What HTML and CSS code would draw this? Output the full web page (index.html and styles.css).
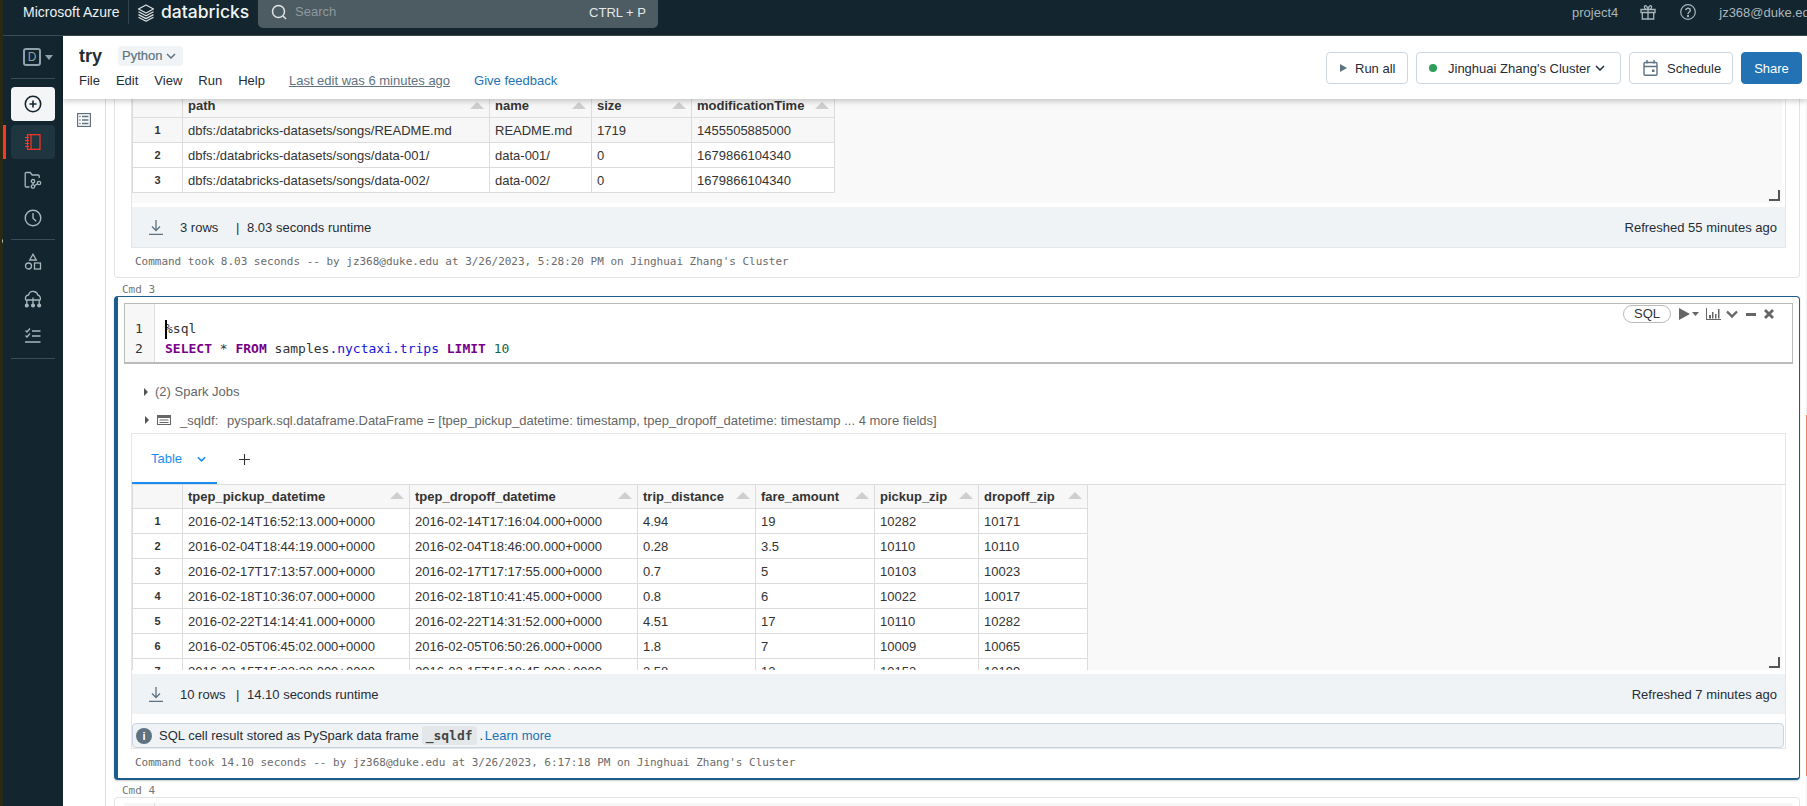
FILE: index.html
```html
<!DOCTYPE html>
<html lang="en">
<head>
<meta charset="utf-8">
<title>try - Databricks</title>
<link rel="stylesheet" href="styles.css">
</head>
<body>
<div class="edge-strip"><span class="edge-notch"></span></div>
<div class="app">
  <header class="topbar">
    <span class="brand-azure">Microsoft Azure</span>
    <span class="brand-sep"></span>
    <svg class="brand-logo" viewBox="0 0 18 18" fill="none" stroke="#dfe4e6" stroke-width="1.2" stroke-linejoin="round"><path d="M9 1 16.500 5 9 9 1.500 5Z"/><path d="M1.500 7.800 9 11.800 16.500 7.800"/><path d="M1.500 10.600 9 14.600 16.500 10.600"/><path d="M1.500 13.200 9 17.200 16.500 13.200"/></svg>
    <span class="brand-name">databricks</span>
    <div class="searchbox">
      <svg class="search-icon" viewBox="0 0 16 16" fill="none" stroke="#dfe4e6" stroke-width="1.500"><circle cx="7.500" cy="7.500" r="6"/><path d="M12 12l3 3"/></svg>
      <span class="search-text">Search</span>
      <span class="search-key">CTRL + P</span>
    </div>
    <div class="top-right">
      <span class="top-text">project4</span>
      <svg class="top-gift" viewBox="0 0 16 16" fill="none" stroke="#a9b6bc" stroke-width="1.300"><path d="M1 5.500h14v3H1zM2.300 8.500v6.500h11.400V8.500M8 5.500V15M8 5.500C6 5.500 4 4.500 4.500 2.500S7.500 2 8 5.500c.5-3.500 3-5 3.500-3S10 5.500 8 5.500Z"/></svg>
      <svg class="top-help" viewBox="0 0 16 16" fill="none" stroke="#a9b6bc" stroke-width="1.200"><circle cx="8" cy="8" r="7.300"/><path d="M5.800 6.200C6 3.600 10.300 3.600 10.300 6.200c0 1.800-2.300 1.700-2.300 3.700" stroke-width="1.400"/><circle cx="8" cy="12" r=".6" fill="#a9b6bc"/></svg>
      <span class="top-text top-user">jz368@duke.edu</span>
    </div>
  </header>
  <div class="shell">
    <nav class="sidebar">
      <div class="workspace-switch"><span class="workspace-d">D</span><span class="caret-down"></span></div>
      <div class="side-rule"></div>
      <div class="side-item side-new">
        <svg class="icon-18" viewBox="0 0 18 18" fill="none" stroke="#13252e" stroke-width="1.600"><circle cx="9" cy="9" r="7.700"/><path d="M9 5.500v7M5.500 9h7"/></svg>
      </div>
      <div class="side-item side-active">
        <svg class="icon-18" viewBox="0 0 18 18" fill="none" stroke="#ff3621" stroke-width="1.200"><rect x="3.500" y="1.700" width="12.500" height="14.600"/><path d="M7 1.700v14.600M1 4.500h4M1 7.500h4M1 10.500h4M1 13.500h4"/></svg>
      </div>
      <div class="side-item">
        <svg class="icon-18" viewBox="0 0 18 18" fill="none" stroke="#a9b6bc" stroke-width="1.300"><path d="M5.500 16H2.200a1 1 0 0 1-1-1V2.500a1 1 0 0 1 1-1h4l2 2.500h6a1 1 0 0 1 1 1V7"/><circle cx="9" cy="10.200" r="1.700"/><circle cx="9" cy="15.500" r="1.700"/><circle cx="15" cy="12" r="1.700"/><path d="M9 12v1.800M10.600 14.800 13.500 12.800"/></svg>
      </div>
      <div class="side-item">
        <svg class="icon-18" viewBox="0 0 18 18" fill="none" stroke="#a9b6bc" stroke-width="1.400"><circle cx="9" cy="9" r="7.800"/><path d="M9 4v5.200l3.200 3"/></svg>
      </div>
      <div class="side-rule side-rule-mid"></div>
      <div class="side-group">
        <div class="side-item">
          <svg class="icon-18" viewBox="0 0 18 18" fill="none" stroke="#a9b6bc" stroke-width="1.300"><path d="M9 1.200 12.300 7H5.700Z"/><circle cx="4.500" cy="13" r="3"/><rect x="10.500" y="10" width="6" height="6"/></svg>
        </div>
        <div class="side-item">
          <svg class="icon-18" viewBox="0 0 18 18" fill="none" stroke="#a9b6bc" stroke-width="1.300"><path d="M2 10.500C.5 7.500 2.300 5 4.500 5 5.500 2 8 1 10 1.500c2.500.5 3.500 2 3.700 3.500 2.300.2 3.300 3 2.300 5.500M2.800 14V10h12.400v4M9 7.500V14"/><circle cx="2.800" cy="15.500" r="1.400" fill="#a9b6bc"/><circle cx="9" cy="15.500" r="1.400" fill="#a9b6bc"/><circle cx="15.200" cy="15.500" r="1.400" fill="#a9b6bc"/></svg>
        </div>
        <div class="side-item">
          <svg class="icon-18" viewBox="0 0 18 18" fill="none" stroke="#a9b6bc" stroke-width="1.300"><path d="M1.500 3.500 3 5l3-3.500M1.500 8.500 3 10l3-3.500M8 4h8.500M8 9h8.500M1 15h15.500"/></svg>
        </div>
      </div>
      <div class="side-rule side-rule-end"></div>
    </nav>
    <div class="workspace">
      <section class="nb-header">
        <div class="nb-head-left">
          <div class="nb-title-row">
            <h1 class="nb-title">try</h1>
            <span class="lang-pill">Python <svg class="chev-svg" viewBox="0 0 10 6" fill="none" stroke="#5f7281" stroke-width="1.500"><path d="M1 1l4 4 4-4"/></svg></span>
          </div>
          <div class="nb-menu">
            <span>File</span><span>Edit</span><span>View</span><span>Run</span><span>Help</span>
            <span class="last-edit">Last edit was 6 minutes ago</span>
            <span class="feedback">Give feedback</span>
          </div>
        </div>
        <div class="nb-actions">
          <button class="btn btn-run"><span class="tri-right"></span>Run all</button>
          <button class="btn btn-cluster"><span class="green-dot"></span><span class="cluster-name">Jinghuai Zhang's Cluster</span><svg class="chev-svg dark" viewBox="0 0 10 6" fill="none" stroke="#1f2d36" stroke-width="1.500"><path d="M1 1l4 4 4-4"/></svg></button>
          <button class="btn btn-schedule"><svg class="cal-svg" viewBox="0 0 15 16" fill="none" stroke="#5f7281" stroke-width="1.400"><rect x="1" y="2.500" width="13" height="12.800" rx="1"/><path d="M1 6.500h13M4 0v3.500M11 0v3.500"/><rect x="9" y="9.500" width="2.500" height="2.500" fill="#5f7281" stroke="none"/></svg>Schedule</button>
          <button class="btn btn-share">Share</button>
        </div>
      </section>
      <main class="nb-main">
        <aside class="toc-gutter">
          <svg class="toc-icon" viewBox="0 0 14 14" fill="none" stroke="#5f7281" stroke-width="1.200"><rect x=".6" y=".6" width="12.800" height="12.800"/><path d="M5 3.500h6.500M5 7h6.500M5 10.500h6.500" stroke-width="1.500"/><path d="M2.300 3.500h1.200M2.300 7h1.200M2.300 10.500h1.200" stroke-width="1.500"/></svg>
        </aside>
        <div class="cells">
          <article class="cell cell-first">
            <div class="result-box result-box-open">
              <div class="grid-view grid-view-a">
                <table class="grid grid-a">
                  <colgroup><col class="c-a0"><col class="c-a1"><col class="c-a2"><col class="c-a3"><col class="c-a4"></colgroup>
                  <thead><tr><th></th><th><div class="th-in">path<i class="sort"></i></div></th><th><div class="th-in">name<i class="sort"></i></div></th><th><div class="th-in">size<i class="sort"></i></div></th><th><div class="th-in">modificationTime<i class="sort"></i></div></th></tr></thead>
                  <tbody>
                    <tr class="row-hover"><td class="num">1</td><td>dbfs:/databricks-datasets/songs/README.md</td><td>README.md</td><td>1719</td><td>1455505885000</td></tr>
                    <tr><td class="num">2</td><td>dbfs:/databricks-datasets/songs/data-001/</td><td>data-001/</td><td>0</td><td>1679866104340</td></tr>
                    <tr><td class="num">3</td><td>dbfs:/databricks-datasets/songs/data-002/</td><td>data-002/</td><td>0</td><td>1679866104340</td></tr>
                  </tbody>
                </table>
                <span class="resize-handle"></span>
              </div>
              <div class="result-foot">
                <svg class="dl-icon" viewBox="0 0 14 15" fill="none" stroke="#5f7281" stroke-width="1.300"><path d="M7 0v10M3 6.500 7 10.500l4-4M0 14.300h14"/></svg>
                <span class="foot-rows">3 rows</span><span class="foot-bar">|</span><span>8.03 seconds runtime</span>
                <span class="foot-right">Refreshed 55 minutes ago</span>
              </div>
            </div>
            <p class="cmd-took">Command took 8.03 seconds -- by jz368@duke.edu at 3/26/2023, 5:28:20 PM on Jinghuai Zhang's Cluster</p>
          </article>

          <div class="cmd-label">Cmd 3</div>

          <article class="cell cell-active">
            <div class="code-cell">
              <div class="code-gutter"><div>1</div><div>2</div></div>
              <div class="code-body">
                <span class="cursor"></span>
                <div>%sql</div>
                <div><b class="kw">SELECT</b> * <b class="kw">FROM</b> samples<span class="prop">.nyctaxi.trips</span> <b class="kw">LIMIT</b> <span class="lit">10</span></div>
              </div>
              <div class="cell-tools">
                <span class="lang-badge">SQL</span>
                <svg class="tool-run" viewBox="0 0 20 12" fill="#666"><path d="M0 0 11 6 0 12Z"/><path d="M13 4h7l-3.500 4Z"/></svg>
                <svg class="tool-chart" viewBox="0 0 15 12" fill="#666"><path d="M0 0h1v11h14v1H0Z"/><rect x="3" y="7" width="2" height="3.500"/><rect x="6" y="4" width="1.500" height="6.500"/><rect x="9" y="6" width="1.500" height="4.500"/><rect x="12" y="1" width="1.500" height="9.500"/></svg>
                <svg class="tool-chev" viewBox="0 0 12 8" fill="none" stroke="#666" stroke-width="2.400"><path d="M1 1.500 6 6.500l5-5"/></svg>
                <span class="tool-min"></span>
                <svg class="tool-x" viewBox="0 0 10 10" fill="none" stroke="#666" stroke-width="2.800"><path d="M1 1l8 8M9 1l-8 8"/></svg>
              </div>
            </div>
            <div class="jobs-line"><span class="tri-small"></span>(2) Spark Jobs</div>
            <div class="df-line"><span class="tri-small"></span>
              <svg class="df-icon" viewBox="0 0 14 10" fill="none"><rect x=".5" y=".5" width="13" height="9" stroke="#666" fill="#fff"/><rect x=".5" y=".5" width="13" height="2.500" fill="#666"/><path d="M2.500 5h9M2.500 7.500h9" stroke="#666"/></svg>
              <span class="df-name">_sqldf:</span><span>pyspark.sql.dataframe.DataFrame = [tpep_pickup_datetime: timestamp, tpep_dropoff_datetime: timestamp ... 4 more fields]</span>
            </div>
            <div class="result-box">
              <div class="tabs">
                <div class="tab-active">Table<svg class="tab-chev" viewBox="0 0 10 6" fill="none" stroke="#1b8cf0" stroke-width="1.800"><path d="M1 1l4 4 4-4"/></svg></div>
                <svg class="tab-plus" viewBox="0 0 11 11" fill="none" stroke="#333" stroke-width="1.100"><path d="M5.500 0v11M0 5.500h11"/></svg>
              </div>
              <div class="grid-view grid-view-b">
                <table class="grid grid-b">
                  <colgroup><col class="c-b0"><col class="c-b1"><col class="c-b2"><col class="c-b3"><col class="c-b4"><col class="c-b5"><col class="c-b6"></colgroup>
                  <thead><tr><th></th><th><div class="th-in">tpep_pickup_datetime<i class="sort"></i></div></th><th><div class="th-in">tpep_dropoff_datetime<i class="sort"></i></div></th><th><div class="th-in">trip_distance<i class="sort"></i></div></th><th><div class="th-in">fare_amount<i class="sort"></i></div></th><th><div class="th-in">pickup_zip<i class="sort"></i></div></th><th><div class="th-in">dropoff_zip<i class="sort"></i></div></th></tr></thead>
                  <tbody>
                    <tr><td class="num">1</td><td>2016-02-14T16:52:13.000+0000</td><td>2016-02-14T17:16:04.000+0000</td><td>4.94</td><td>19</td><td>10282</td><td>10171</td></tr>
                    <tr><td class="num">2</td><td>2016-02-04T18:44:19.000+0000</td><td>2016-02-04T18:46:00.000+0000</td><td>0.28</td><td>3.5</td><td>10110</td><td>10110</td></tr>
                    <tr><td class="num">3</td><td>2016-02-17T17:13:57.000+0000</td><td>2016-02-17T17:17:55.000+0000</td><td>0.7</td><td>5</td><td>10103</td><td>10023</td></tr>
                    <tr><td class="num">4</td><td>2016-02-18T10:36:07.000+0000</td><td>2016-02-18T10:41:45.000+0000</td><td>0.8</td><td>6</td><td>10022</td><td>10017</td></tr>
                    <tr><td class="num">5</td><td>2016-02-22T14:14:41.000+0000</td><td>2016-02-22T14:31:52.000+0000</td><td>4.51</td><td>17</td><td>10110</td><td>10282</td></tr>
                    <tr><td class="num">6</td><td>2016-02-05T06:45:02.000+0000</td><td>2016-02-05T06:50:26.000+0000</td><td>1.8</td><td>7</td><td>10009</td><td>10065</td></tr>
                    <tr><td class="num">7</td><td>2016-02-15T15:03:28.000+0000</td><td>2016-02-15T15:18:45.000+0000</td><td>2.58</td><td>12</td><td>10153</td><td>10199</td></tr>
                  </tbody>
                </table>
                <span class="resize-handle"></span>
              </div>
              <div class="result-foot result-foot-b">
                <svg class="dl-icon" viewBox="0 0 14 15" fill="none" stroke="#5f7281" stroke-width="1.300"><path d="M7 0v10M3 6.500 7 10.500l4-4M0 14.300h14"/></svg>
                <span class="foot-rows">10 rows</span><span class="foot-bar">|</span><span>14.10 seconds runtime</span>
                <span class="foot-right">Refreshed 7 minutes ago</span>
              </div>
              <div class="info-box">
                <span class="info-dot">i</span>
                <span>SQL cell result stored as PySpark data frame</span>
                <code class="info-code">_sqldf</code>
                <span>. <span class="info-link">Learn more</span></span>
              </div>
            </div>
            <p class="cmd-took">Command took 14.10 seconds -- by jz368@duke.edu at 3/26/2023, 6:17:18 PM on Jinghuai Zhang's Cluster</p>
          </article>

          <div class="cmd-label cmd-label-4">Cmd 4</div>

          <article class="cell cell-next">
            <div class="next-code"><span class="next-gutter"></span></div>
          </article>
        </div>
        <span class="scroll-mark"></span>
      </main>
    </div>
  </div>
</div>
</body>
</html>
```

FILE: styles.css
```css
* { box-sizing: border-box; }
html, body { margin: 0; padding: 0; height: 806px; overflow: hidden; }
body {
  display: flex;
  width: 1807px;
  background: #fff;
  font-family: "Liberation Sans", Arial, sans-serif;
  font-size: 13px;
  color: #1f2d36;
  position: relative;
}
.edge-strip { width: 3px; flex: none; background: #2a2a14; position: relative; }
.edge-notch {
  position: absolute; left: 0; top: 236px;
  border-left: 2px solid transparent;
  border-top: 5px solid transparent; border-bottom: 5px solid transparent;
  border-right: 2px solid #d8d8d8;
}
.app { flex: 1; min-width: 0; display: flex; flex-direction: column; height: 806px; }

/* top bar */
.topbar {
  height: 36px; flex: none; display: flex; align-items: flex-start;
  background: #13252e; border-bottom: 1px solid #3a4c55; color: #fff;
}
.brand-azure { font-size: 14px; line-height: 24px; margin-left: 20px; color: #eef1f2; width: 105px; flex: none; }
.brand-sep { width: 1px; height: 24px; background: #33454e; flex: none; }
.brand-logo { width: 18px; height: 18px; margin: 4px 0 0 8px; flex: none; }
.brand-name {
  font-family: Inter, "Noto Sans", sans-serif; font-weight: 500; font-size: 17.500px; line-height: 24px;
  margin-left: 6px; width: 97px; flex: none; color: #f1f3f4;
}
.searchbox {
  width: 400px; height: 28px; flex: none; background: #4d5b62; border-radius: 0 0 5px 5px;
  display: flex; align-items: center; padding: 0 12px 4px 13px;
}
.search-icon { width: 16px; height: 16px; flex: none; }
.search-text { margin: 0 0 2px 8px; color: #8d9a9f; }
.search-key { margin-left: auto; color: #e4e8ea; }
.top-right { margin-left: auto; display: flex; align-items: center; height: 24px; width: 235px; flex: none; overflow: hidden; }
.top-text { color: #a9b6bc; white-space: nowrap; }
.top-gift { width: 16px; height: 16px; margin-left: 22px; flex: none; }
.top-help { width: 16px; height: 16px; margin-left: 24px; flex: none; }
.top-user { margin-left: 23px; }

/* shell */
.shell { flex: 1; min-height: 0; display: flex; }
.sidebar {
  width: 60px; flex: none; background: #13252e; padding: 12px 0 0;
  display: flex; flex-direction: column; align-items: flex-start; position: relative;
}
.workspace-switch { display: flex; align-items: center; margin-left: 20px; height: 18px; }
.workspace-d {
  width: 18px; height: 18px; border: 2px solid #8fa1ab; border-radius: 3px; color: #8fa1ab;
  font-size: 12px; line-height: 14px; text-align: center; font-weight: 400;
}
.caret-down { margin-left: 4px; border-left: 4px solid transparent; border-right: 4px solid transparent; border-top: 5px solid #8fa1ab; }
.side-rule { width: 44px; height: 1px; background: #3a4c55; margin: 12px 0 8px 8px; flex: none; }
.side-item {
  width: 44px; height: 34px; margin: 0 0 4px 8px; flex: none; border-radius: 4px;
  display: flex; align-items: center; justify-content: center;
}
.side-new { background: #f3f5f6; }
.side-active { background: #1f3540; position: relative; }
.side-active::before { content: ""; position: absolute; left: -8px; top: 0; width: 3px; height: 34px; background: #ff3621; }
.icon-18 { width: 18px; height: 18px; display: block; }
.side-rule-mid { margin: 0 0 5px 8px; }
.side-group { display: flex; flex-direction: column; gap: 3px; }
.side-group .side-item { margin-bottom: 0; }
.side-rule-end { margin: 5px 0 0 8px; }

/* workspace */
.workspace { flex: 1; min-width: 0; display: flex; flex-direction: column; }
.nb-header {
  height: 63px; flex: none; display: flex; justify-content: space-between; background: #fff;
  box-shadow: 0 2px 6px rgba(0, 0, 0, .22); position: relative; z-index: 2; padding: 10px 5px 0 16px;
}
.nb-title-row { display: flex; align-items: center; height: 20px; }
.nb-title { margin: 0; font-size: 18px; font-weight: 700; line-height: 22px; color: #1f2d36; width: 39px; }
.lang-pill {
  height: 20px; width: 65px; background: #f1f4f7; border-radius: 4px; color: #5f7281; padding-left: 4px;
  line-height: 20px; display: inline-flex; align-items: center; gap: 4px; font-weight: 400; -webkit-text-stroke: .2px #5f7281;
}
.chev-svg { width: 10px; height: 6px; }
.chev-svg.dark { margin-left: 4px; }
.nb-menu { display: flex; gap: 16px; margin-top: 6px; line-height: 18px; color: #1f2d36; }
.last-edit { margin-left: 8px; color: #5f7281; text-decoration: underline; }
.feedback { margin-left: 8px; color: #2272b4; }
.nb-actions { display: flex; gap: 8px; margin-top: 6px; height: 32px; }
.btn {
  font: inherit; height: 32px; background: #fff; border: 1px solid #cbd8e2; border-radius: 4px; color: #1f2d36;
  display: flex; align-items: center; padding: 0;
}
.btn-run { width: 82px; padding-left: 13px; }
.tri-right { border-left: 7px solid #5f7281; border-top: 4.500px solid transparent; border-bottom: 4.500px solid transparent; margin-right: 8px; }
.btn-cluster { width: 205px; padding-left: 12px; }
.green-dot { width: 8px; height: 8px; border-radius: 50%; background: #2e9e5b; margin-right: 11px; }
.btn-schedule { width: 104px; padding-left: 13px; }
.cal-svg { width: 15px; height: 16px; margin-right: 9px; }
.btn-share { width: 61px; background: #2272b4; border-color: #2272b4; color: #fff; justify-content: center; }

.nb-main { flex: 1; min-height: 0; display: flex; position: relative; overflow: hidden; }
.toc-gutter { width: 43px; flex: none; border-right: 1px solid #d5e0e8; padding: 14px 0 0 14px; }
.toc-icon { width: 14px; height: 14px; display: block; }
.cells { flex: 1; min-width: 0; padding: 0 6px 0 8px; border-right: 1px solid #f2f2f2; }
.scroll-mark { position: absolute; right: 0; top: 316px; width: 1px; height: 361px; background: #ef7f56; }

/* cells */
.cell { background: #fff; border: 1px solid #e1e5e8; border-radius: 4px; }
.cell-first { border-top: 0; border-radius: 0 0 4px 4px; height: 179px; padding: 0 13px 0 16px; }
.result-box { border: 1px solid #e6e6e6; }
.result-box-open { border-top: 0; border-bottom: 0; }
.grid-view { margin-right: 3px; background: #f9f9f9; overflow: hidden; position: relative; }
.grid-view-a { height: 104px; }
.grid-view-b { height: 185px; }
.grid { border-collapse: separate; border-spacing: 0; table-layout: fixed; background: #fff; border-left: 1px solid #dcdcdc; }
.grid-a { width: 702px; }
.grid-b { width: 955px; }
.c-a0 { width: 50px; } .c-a1 { width: 307px; } .c-a2 { width: 102px; } .c-a3 { width: 100px; } .c-a4 { width: 143px; }
.c-b0 { width: 50px; } .c-b1 { width: 227px; } .c-b2 { width: 228px; } .c-b3 { width: 118px; } .c-b4 { width: 119px; } .c-b5 { width: 104px; } .c-b6 { width: 109px; }
.grid th, .grid td {
  box-sizing: border-box; height: 25px; padding: 0 5px; border-right: 1px solid #dcdcdc; border-bottom: 1px solid #dcdcdc;
  white-space: nowrap; overflow: hidden; text-align: left; font-size: 13px; color: #333;
}
.grid th { background: #f7f7f7; font-weight: 700; height: 24px; }
.grid-a th { height: 18px; padding-bottom: 4px; line-height: 14px; }
.grid td.num { text-align: center; font-weight: 700; font-size: 11px; }
.row-hover td { background: #f7f7f7; }
.th-in { display: flex; justify-content: space-between; align-items: center; }
.sort { flex: none; margin-top: -2px; border-left: 7px solid transparent; border-right: 7px solid transparent; border-bottom: 7px solid #cfcfcf; }
.resize-handle { position: absolute; right: 2px; bottom: 2px; width: 11px; height: 11px; border-right: 2px solid #555; border-bottom: 2px solid #555; }
.result-foot { height: 41px; margin-top: 4px; background: #f0f3f6; display: flex; align-items: center; padding: 0 8px 0 17px; border-bottom: 1px solid #e6e6e6; color: #1f2d36; }
.result-foot-b { height: 40px; border-bottom: 0; }
.dl-icon { width: 14px; height: 15px; flex: none; margin-right: 17px; }
.foot-rows { width: 56px; flex: none; }
.foot-bar { width: 11px; flex: none; }
.foot-right { margin-left: auto; }
.cmd-took { margin: 0; font-family: "DejaVu Sans Mono", monospace; font-size: 11px; letter-spacing: -.02px; line-height: 14px; color: #6b6b6b; white-space: nowrap; padding: 7px 0 0 4px; }
.cell-active .cmd-took { padding-left: 11px; }
.cmd-label { font-family: "DejaVu Sans Mono", monospace; font-size: 11px; line-height: 14px; color: #777; height: 18px; padding: 5px 0 0 8px; }
.cmd-label-4 { height: 17px; padding-top: 4px; }

/* active cell */
.cell-active {
  height: 484px; border: 1px solid #1b5e8e; border-left-width: 4px; border-bottom-width: 2px;
  padding: 6px 6px 0; box-shadow: 0 1px 2px rgba(0, 0, 0, .2);
}
.code-cell { height: 61px; display: flex; border: 1px solid #bbb; border-bottom-width: 2px; position: relative; font-family: "DejaVu Sans Mono", monospace; font-size: 13px; line-height: 19.500px; color: #333; }
.code-gutter { width: 30px; flex: none; background: #f7f7f7; border-right: 1px solid #ddd; padding: 15px 0 0 10px; color: #333; }
.code-body { padding: 15px 0 0 10px; position: relative; white-space: nowrap; }
.cursor { position: absolute; left: 10px; top: 16px; width: 2px; height: 19px; background: #000; }
.kw { color: #770088; font-weight: 700; }
.prop { color: #1414d8; }
.lit { color: #116644; }
.cell-tools { position: absolute; right: 18px; top: 1px; display: flex; align-items: center; font-family: "Liberation Sans", sans-serif; height: 18px; }
.lang-badge { width: 48px; height: 18px; border: 1px solid #bbb; border-radius: 9px; text-align: center; line-height: 16px; color: #333; font-size: 13px; margin-right: 8px; }
.tool-run { width: 20px; height: 12px; margin-right: 7px; }
.tool-chart { width: 15px; height: 12px; margin-right: 5px; }
.tool-chev { width: 12px; height: 8px; margin-right: 8px; }
.tool-min { width: 10px; height: 3px; background: #666; margin-right: 8px; }
.tool-x { width: 10px; height: 10px; }
.jobs-line { height: 20px; margin-top: 18px; line-height: 20px; padding-left: 20px; color: #666; display: flex; align-items: center; }
.tri-small { border-left: 4px solid #555; border-top: 4px solid transparent; border-bottom: 4px solid transparent; margin-right: 7px; flex: none; }
.df-line { height: 20px; margin-top: 8px; padding-left: 21px; color: #666; display: flex; align-items: center; white-space: nowrap; }
.df-line .tri-small { margin-right: 8px; }
.df-icon { width: 14px; height: 10px; flex: none; margin-right: 9px; }
.df-name { width: 47px; flex: none; }
.cell-active .result-box { margin: 3px 7px 0; height: 316px; }
.tabs { height: 51px; border-bottom: 1px solid #ddd; display: flex; align-items: flex-start; }
.tab-active {
  width: 85px; height: 50px; border-bottom: 2px solid #1b8cf0; color: #1b8cf0; padding: 16px 0 0 19px; line-height: 18px;
  display: flex; align-items: flex-start; flex: none;
}
.tab-chev { width: 9px; height: 6px; margin: 6px 0 0 15px; }
.tab-plus { width: 11px; height: 11px; margin: 20px 0 0 22px; }
.info-box {
  height: 25px; margin-top: 9px; margin-right: 1px; background: #f0f3f6; border: 1px solid #c9d5e0; border-radius: 4px;
  display: flex; align-items: center; padding-left: 3px; gap: 3px; color: #1f2d36;
}
.info-dot { width: 16px; height: 16px; border-radius: 50%; background: #5f7281; color: #fff; font-weight: 700; font-size: 11px; line-height: 16px; text-align: center; margin-right: 4px; }
.info-code { font-family: "DejaVu Sans Mono", monospace; font-weight: 700; font-size: 13px; background: #e3e7ea; border-radius: 3px; padding: 0 4px; height: 19px; line-height: 19px; color: #444; }
.info-link { color: #2272b4; margin-left: -2px; }
.cell-next { height: 20px; padding: 5px 6px 0 9px; border-radius: 4px 4px 0 0; }
.next-code { height: 20px; background: #f7f7f7; }
.next-gutter { display: block; width: 31px; height: 20px; border-right: 1px solid #e0e0e0; }
```
